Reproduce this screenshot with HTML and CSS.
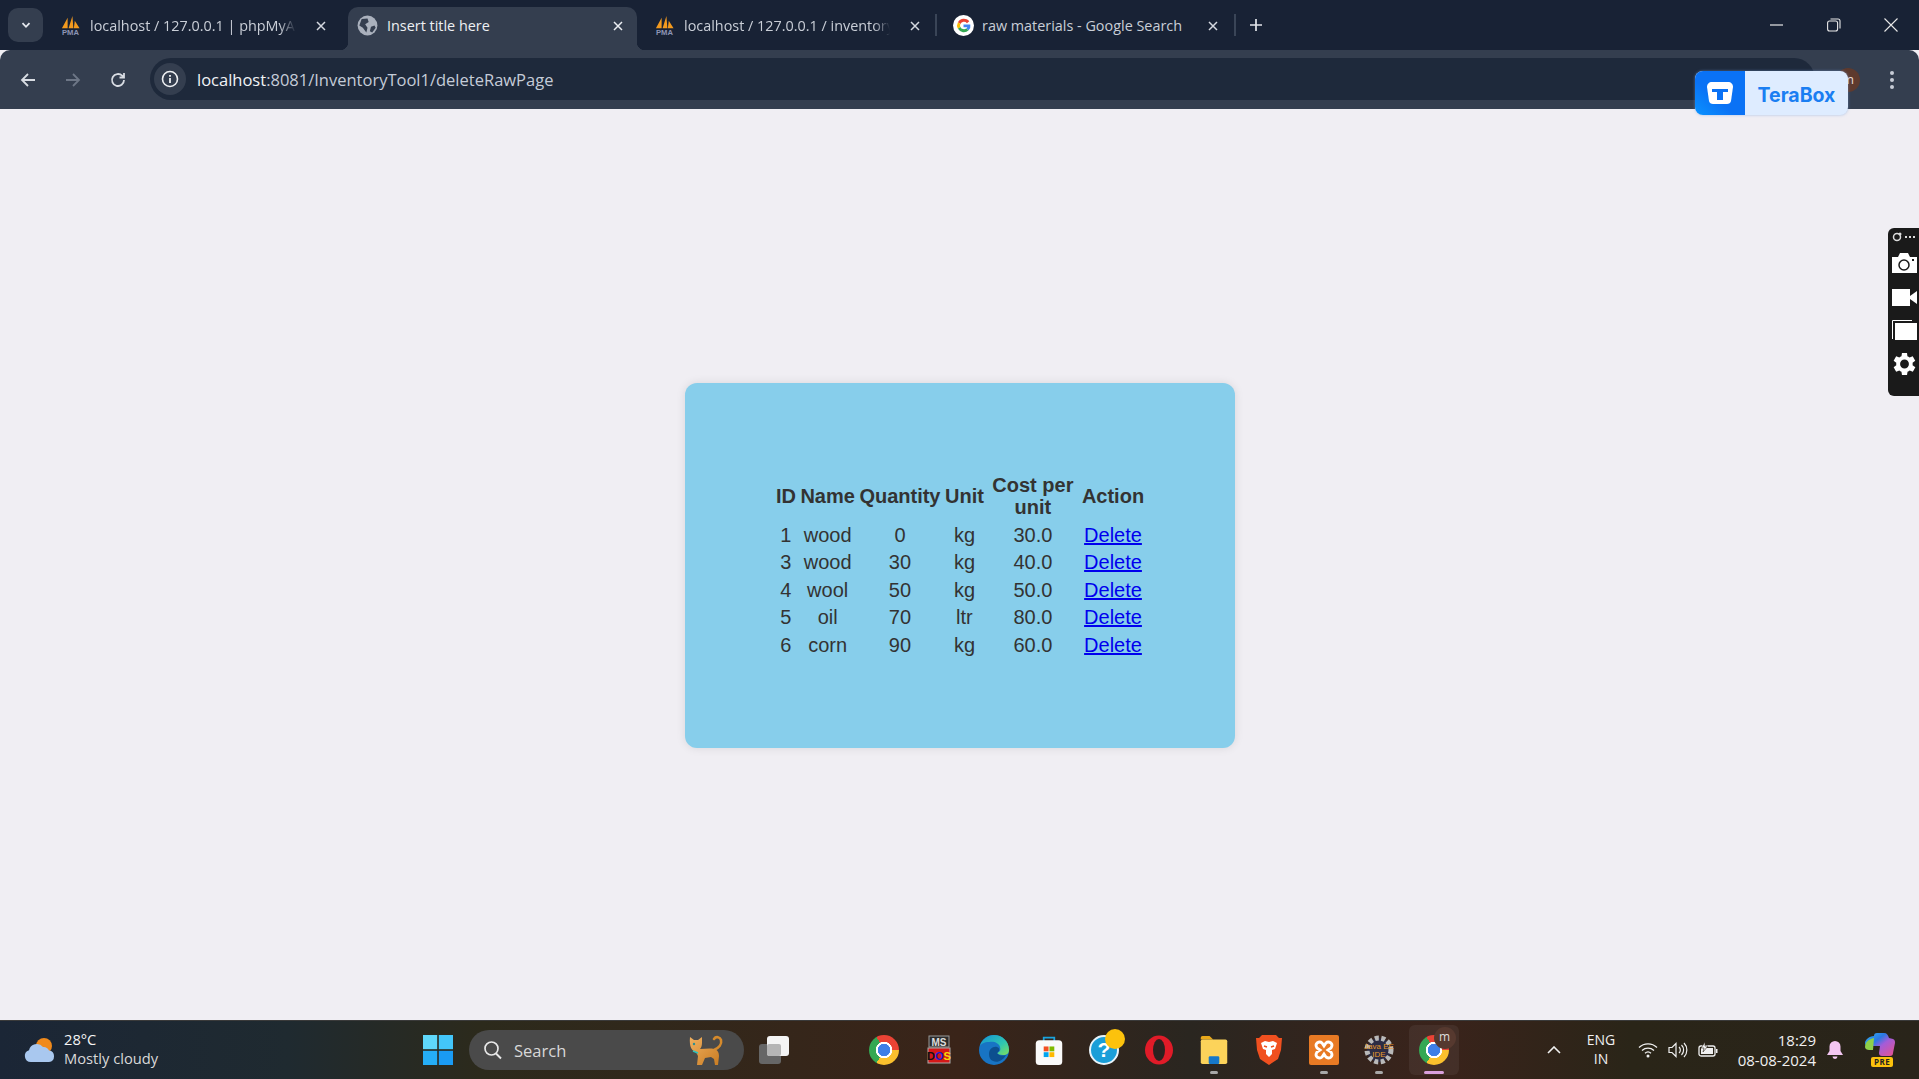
FILE: index.html
```html
<!DOCTYPE html>
<html lang="en">
<head>
  <meta charset="UTF-8">
  <meta name="viewport" content="width=device-width, initial-scale=1.0">
  <title>Insert title here</title>
  <link rel="stylesheet" href="styles.css">
</head>
<body>

  <!-- Tab strip -->
  <div class="tabstrip">
    <div class="tab-search">
      <svg width="12" height="12" viewBox="0 0 12 12"><path d="M2.5 4.2 6 7.8l3.5-3.6" fill="none" stroke="#e6e9ef" stroke-width="1.8"/></svg>
    </div>
    <div class="tab">
      <svg class="favicon" viewBox="0 0 22 22"><path d="M2 14 8 3v11zM9 14l4-13 1 13zM14.500 14l1-8 5 8z" fill="#f39a1e"/><text x="11" y="21" class="pma-mark">PMA</text></svg>
      <span class="tab-title">localhost / 127.0.0.1 | phpMyAdmin</span>
      <svg class="tab-close" viewBox="0 0 12 12"><path d="M2 2l8 8M10 2l-8 8" stroke="#d5d9e0" stroke-width="1.5"/></svg>
    </div>
    <div class="tab active">
      <svg class="favicon" viewBox="0 0 18 18"><circle cx="9" cy="9" r="8.5" fill="#aab1bd"/><path d="M4 3.5 9 3l1 3-3 2 2 3-1 4-3-4-3-2zM12 10l3-1 1 2-3 4-2-1z" fill="#343e4f"/></svg>
      <span class="tab-title">Insert title here</span>
      <svg class="tab-close" viewBox="0 0 12 12"><path d="M2 2l8 8M10 2l-8 8" stroke="#eceff3" stroke-width="1.5"/></svg>
    </div>
    <div class="tab">
      <svg class="favicon" viewBox="0 0 22 22"><path d="M2 14 8 3v11zM9 14l4-13 1 13zM14.500 14l1-8 5 8z" fill="#f39a1e"/><text x="11" y="21" class="pma-mark">PMA</text></svg>
      <span class="tab-title">localhost / 127.0.0.1 / inventory_db</span>
      <svg class="tab-close" viewBox="0 0 12 12"><path d="M2 2l8 8M10 2l-8 8" stroke="#d5d9e0" stroke-width="1.5"/></svg>
    </div>
    <span class="tab-divider"></span>
    <div class="tab next">
      <svg class="favicon" viewBox="0 0 20 20">
        <circle cx="10" cy="10" r="10" fill="#fff"/>
        <path d="M15.5 6A6.6 6.6 0 0 0 4.700 6.800L7 8.600A3.800 3.800 0 0 1 13.300 7.800z" fill="#ea4335"/>
        <path d="M4.700 6.800a6.600 6.600 0 0 0 0 6.400L7 11.400a3.800 3.800 0 0 1 0-2.800z" fill="#fbbc05"/>
        <path d="M4.700 13.200a6.600 6.600 0 0 0 10.200 1.400l-2.200-1.800A3.800 3.800 0 0 1 7 11.400z" fill="#34a853"/>
        <path d="M16.500 9H10v2.700h3.600a3 3 0 0 1-.9 1.100l2.200 1.800a6.500 6.500 0 0 0 1.600-5.600z" fill="#4285f4"/>
      </svg>
      <span class="tab-title">raw materials - Google Search</span>
      <svg class="tab-close" viewBox="0 0 12 12"><path d="M2 2l8 8M10 2l-8 8" stroke="#d5d9e0" stroke-width="1.5"/></svg>
    </div>
    <span class="tab-divider"></span>
    <svg class="new-tab" viewBox="0 0 14 14"><path d="M7 1v12M1 7h12" stroke="#e2e5ea" stroke-width="1.700"/></svg>
    <div class="window-controls">
      <svg viewBox="0 0 14 14"><path d="M0 7h13" stroke="#e8e8e8" stroke-width="1.200"/></svg>
      <svg viewBox="0 0 14 14"><rect x="0.600" y="3" width="10" height="10" rx="2" fill="none" stroke="#e8e8e8" stroke-width="1.100"/><path d="M3.500 1h7.500a2 2 0 0 1 2 2v7.500" fill="none" stroke="#e8e8e8" stroke-width="1.100"/></svg>
      <svg viewBox="0 0 14 14"><path d="M.5.500l13 13M13.500.500l-13 13" stroke="#e8e8e8" stroke-width="1.100"/></svg>
    </div>
  </div>

  <!-- Address bar -->
  <div class="toolbar">
    <svg class="nav-icon" viewBox="0 0 18 18"><path d="M16 9H3M9 3 3 9l6 6" fill="none" stroke="#d8dce3" stroke-width="1.800"/></svg>
    <svg class="nav-icon" viewBox="0 0 18 18"><path d="M2 9h13M9 3l6 6-6 6" fill="none" stroke="#6d7686" stroke-width="1.800"/></svg>
    <svg class="nav-icon" viewBox="0 0 18 18"><path d="M15 9a6 6 0 1 1-1.800-4.300L15 6.500M15 2v4.500h-4.500" fill="none" stroke="#d8dce3" stroke-width="1.800"/></svg>
    <div class="address">
      <span class="site-info">
        <svg width="18" height="18" viewBox="0 0 18 18"><circle cx="9" cy="9" r="7.500" fill="none" stroke="#eef0f3" stroke-width="1.600"/><path d="M9 8v5M9 5v1.800" stroke="#eef0f3" stroke-width="1.800"/></svg>
      </span>
      <span class="url"><span class="url-host">localhost</span>:8081/InventoryTool1/deleteRawPage</span>
    </div>
    <span class="avatar">m</span>
    <svg class="kebab" viewBox="0 0 6 20"><circle cx="3" cy="3" r="2" fill="#c7ccd6"/><circle cx="3" cy="10" r="2" fill="#c7ccd6"/><circle cx="3" cy="17" r="2" fill="#c7ccd6"/></svg>
  </div>

  <!-- Page content -->
  <main class="page">
    <div class="card">
      <table class="raw-table">
        <thead>
          <tr>
            <th>ID</th>
            <th>Name</th>
            <th>Quantity</th>
            <th>Unit</th>
            <th class="cost-col">Cost per unit</th>
            <th>Action</th>
          </tr>
        </thead>
        <tbody>
          <tr><td>1</td><td>wood</td><td>0</td><td>kg</td><td>30.0</td><td><a href="#">Delete</a></td></tr>
          <tr><td>3</td><td>wood</td><td>30</td><td>kg</td><td>40.0</td><td><a href="#">Delete</a></td></tr>
          <tr><td>4</td><td>wool</td><td>50</td><td>kg</td><td>50.0</td><td><a href="#">Delete</a></td></tr>
          <tr><td>5</td><td>oil</td><td>70</td><td>ltr</td><td>80.0</td><td><a href="#">Delete</a></td></tr>
          <tr><td>6</td><td>corn</td><td>90</td><td>kg</td><td>60.0</td><td><a href="#">Delete</a></td></tr>
        </tbody>
      </table>
    </div>
  </main>

  <!-- Taskbar -->
  <footer class="taskbar">
    <div class="weather">
      <svg width="32" height="26" viewBox="0 0 32 26">
        <circle cx="20" cy="9" r="8" fill="#f08a1c"/>
        <path d="M7 25a6 6 0 0 1-2-11.700A8 8 0 0 1 19 10a6 6 0 0 1 6 3.500A5.800 5.800 0 0 1 25 25z" fill="#a9c8ef"/>
      </svg>
      <div class="weather-text">
        <span class="temp">28°C</span>
        <span>Mostly cloudy</span>
      </div>
    </div>

    <div class="task-center">
      <svg class="win-logo" viewBox="0 0 30 30">
        <rect width="14.200" height="14.200" fill="#5fd8fb"/><rect x="15.800" width="14.200" height="14.200" fill="#43c6fa"/>
        <rect y="15.800" width="14.200" height="14.200" fill="#25aef7"/><rect x="15.800" y="15.800" width="14.200" height="14.200" fill="#1a9bf3"/>
      </svg>
      <div class="search">
        <svg width="20" height="20" viewBox="0 0 20 20"><circle cx="8.500" cy="8.500" r="6.500" fill="none" stroke="#e8e8e8" stroke-width="1.700"/><path d="M13 13.500l5 5" stroke="#e8e8e8" stroke-width="1.900"/></svg>
        <span class="search-text">Search</span>
        <svg class="search-cat" viewBox="0 0 38 32">
          <defs><linearGradient id="catFur" x1="0" y1="0" x2="1" y2="1"><stop offset="0" stop-color="#f0b060"/><stop offset="1" stop-color="#c97c22"/></linearGradient></defs>
          <path d="M26 16c5-2 8-6 7-10-1-3-5-4-7-1" fill="none" stroke="#d58a2c" stroke-width="2.600" stroke-linecap="round"/>
          <path d="M2 3l4 3h4l4-3 0 6c0 3-1 5-2 6 5 0 10-1 14 0 4 1 5 4 5 7l-1 9h-3l-1-6-3-2-6 1-3 7H9l1-9-2-4C4 17 1 13 2 3z" fill="url(#catFur)"/>
          <circle cx="6" cy="10" r="1.200" fill="#2a8f94"/>
          <path d="M5 17l5 2" stroke="#2cc5c0" stroke-width="1.500"/>
        </svg>
      </div>
      <svg class="task-view" viewBox="0 0 30 28">
        <rect y="8" width="22" height="20" rx="3" fill="#666"/>
        <rect x="8" width="22" height="20" rx="3" fill="#f4f4f4"/>
        <rect x="8" y="8" width="14" height="12" rx="2" fill="#b5b5b5"/>
      </svg>

      <div class="apps">
        <div class="app"><span class="chrome-icon"></span></div>
        <div class="app">
          <svg class="app-icon" viewBox="0 0 30 30">
            <rect x="5" y="1" width="20" height="11" fill="#2c2c2c" stroke="#999"/>
            <text x="15" y="10.500" class="dos-ms">MS</text>
            <rect x="4" y="13" width="22" height="15" fill="#d41818" stroke="#aaa"/>
            <text x="15" y="25" class="dos-os"><tspan fill="#111">D</tspan><tspan fill="#1a1ad0">O</tspan><tspan fill="#f5d90a">S</tspan></text>
          </svg>
        </div>
        <div class="app">
          <svg class="app-icon" viewBox="0 0 30 30">
            <defs><linearGradient id="edgeTop" x1="0" y1="0" x2="1" y2="1"><stop offset="0" stop-color="#1493d6"/><stop offset=".6" stop-color="#2fc6b0"/><stop offset="1" stop-color="#7fe05c"/></linearGradient></defs>
            <circle cx="15" cy="15" r="15" fill="#1874c4"/>
            <path d="M1 11C3 4 9 0 15 0c8 0 15 6 15 15 0 3-2 5-6 5-3 0-5-1-6-2 3-1 4-3 3-6-1-4-6-6-11-5-5 0-8 2-9 4z" fill="url(#edgeTop)"/>
            <path d="M10 19c0-5 4-8 8-7 3 1 3 4 0 6 2 3 6 3 9 2-3 6-9 8-13 6-3-1-4-4-4-7z" fill="#0c4f8f"/>
          </svg>
        </div>
        <div class="app">
          <svg class="app-icon" viewBox="0 0 30 34">
            <path d="M9 8V3h12v5" fill="none" stroke="#19a3dd" stroke-width="2"/>
            <rect y="6" width="30" height="28" rx="4" fill="#fafafa"/>
            <rect x="9" y="13" width="5.500" height="5.500" fill="#f25022"/><rect x="15.500" y="13" width="5.500" height="5.500" fill="#7fba00"/>
            <rect x="9" y="19.500" width="5.500" height="5.500" fill="#00a4ef"/><rect x="15.500" y="19.500" width="5.500" height="5.500" fill="#ffb900"/>
          </svg>
        </div>
        <div class="app">
          <svg class="app-icon" viewBox="0 0 30 30">
            <circle cx="15" cy="15" r="14" fill="#1a9ed8" stroke="#e9f4fa" stroke-width="2"/>
            <text x="15" y="22" class="help-mark">?</text>
          </svg>
          <span class="help-badge"></span>
        </div>
        <div class="app">
          <svg class="app-icon" viewBox="0 0 30 30">
            <ellipse cx="15" cy="15" rx="14" ry="14.500" fill="#e01b28"/>
            <ellipse cx="15" cy="15" rx="6" ry="11" fill="#2b2220"/>
          </svg>
        </div>
        <div class="app">
          <svg class="app-icon" viewBox="0 0 30 34">
            <path d="M0 3a2 2 0 0 1 2-2h8l4 4H0z" fill="#e9a91a"/>
            <rect y="5" width="30" height="28" rx="2" fill="#fcd35a"/>
            <rect x="9" y="24" width="12" height="9" rx="1.500" fill="#1678c9"/>
          </svg>
          <span class="app-dot"></span>
        </div>
        <div class="app">
          <svg class="app-icon" viewBox="0 0 26 30">
            <path d="M6 0h14l3 3 3 0-1 12-3 9-9 6-9-6-3-9L0 3l3 0z" fill="#f0501f"/>
            <path d="M5 8l4-2 4 1 4-1 4 2-2 6-3 1v4l-3 3-3-3v-4l-3-1z" fill="#fff"/>
            <path d="M8 11l3 1M18 11l-3 1" stroke="#f0501f" stroke-width="1.500"/>
          </svg>
        </div>
        <div class="app">
          <svg class="app-icon" viewBox="0 0 30 30">
            <rect width="30" height="30" rx="2" fill="#e87a24"/>
            <path d="M8 8q3-2 5 0l2 3 2-3q2-2 5 0q2 2 0 5l-3 2 3 2q2 3 0 5q-2 2-5 0l-2-3-2 3q-2 2-5 0q-2-2 0-5l3-2-3-2q-2-3 0-5z" fill="none" stroke="#fff" stroke-width="2.800"/>
          </svg>
          <span class="app-dot"></span>
        </div>
        <div class="app">
          <svg class="app-icon" viewBox="0 0 30 30">
            <circle cx="15" cy="15" r="12" fill="#2c2c44" stroke="#b9b9b9" stroke-width="5" stroke-dasharray="4 2.500"/>
            <text x="15" y="14" class="javaee">Java EE</text>
            <text x="15" y="22" class="javaee">IDE</text>
          </svg>
          <span class="app-dot"></span>
        </div>
        <div class="app running">
          <span class="chrome-icon"></span>
          <span class="profile-badge">m</span>
          <span class="app-dot wide"></span>
        </div>
      </div>
    </div>

    <div class="tray">
      <svg class="tray-caret" viewBox="0 0 14 8"><path d="M1 7l6-6 6 6" fill="none" stroke="#f0f0f0" stroke-width="1.600"/></svg>
      <div class="lang"><span>ENG</span><span>IN</span></div>
      <svg class="tray-icon" viewBox="0 0 20 16"><path d="M1 5.500a13 13 0 0 1 18 0M4 8.500a9 9 0 0 1 12 0M7 11.200a4.500 4.500 0 0 1 6 0" fill="none" stroke="#f0f0f0" stroke-width="1.300"/><circle cx="10" cy="14" r="1.500" fill="#f0f0f0"/></svg>
      <svg class="tray-icon" viewBox="0 0 20 16"><path d="M1 5.500h3l4-4v13l-4-4H1zM11 5a4 4 0 0 1 0 6M13.500 3a7 7 0 0 1 0 10M16 1a10 10 0 0 1 0 14" fill="none" stroke="#f0f0f0" stroke-width="1.200"/></svg>
      <svg class="tray-icon" viewBox="0 0 20 16"><rect x="1" y="4" width="16" height="10" rx="2" fill="none" stroke="#f0f0f0" stroke-width="1.300"/><rect x="3" y="6" width="12" height="6" fill="#f0f0f0"/><rect x="18" y="7" width="1.500" height="4" fill="#f0f0f0"/><path d="M7 0 3 6h3l-1 4 5-6H7z" fill="#f0f0f0" stroke="#2a2318" stroke-width=".6"/></svg>
      <div class="clock"><span>18:29</span><span>08-08-2024</span></div>
      <svg class="bell" viewBox="0 0 18 20"><path d="M9 1a5.500 5.500 0 0 1 5.500 5.500V11l2.500 4H1l2.500-4V6.500A5.500 5.500 0 0 1 9 1z" fill="#f3c6f2"/><path d="M6.500 16.500a2.500 2.500 0 0 0 5 0z" fill="#f3c6f2"/></svg>
      <div class="copilot">
        <svg width="30" height="24" viewBox="0 0 30 24">
          <defs><linearGradient id="copilotGrad" x1="0" y1="0" x2="1" y2="1"><stop offset="0" stop-color="#35b6f2"/><stop offset=".35" stop-color="#2a78e4"/><stop offset=".55" stop-color="#a45cd8"/><stop offset="1" stop-color="#e8528c"/></linearGradient></defs>
          <path d="M9 3a3 3 0 0 1 3-3h7c3 0 4 2 5 5l4 1c2 1 2 2 2 4l-2 10a3 3 0 0 1-3 3h-8a3 3 0 0 1-3-3l1-7H3a3 3 0 0 1-3-3c0-3 4-7 9-7z" fill="url(#copilotGrad)"/>
          <path d="M0 14c0-5 4-8 9-9l-1 12H4c-2 0-4-1-4-3z" fill="#8ed04a"/>
        </svg>
        <span class="pre-badge">PRE</span>
      </div>
    </div>
  </footer>

  <!-- TeraBox extension badge -->
  <div class="terabox">
    <span class="terabox-logo">
      <svg width="28" height="24" viewBox="0 0 28 24"><path d="M6 1h16c3 0 5 2 5 5l-2 14c-.3 2-2 3-4 3H7c-2 0-3.700-1-4-3L1 6c0-3 2-5 5-5z" fill="#fff"/><path d="M6 8h16v3h-5v8h-6v-8H6z" fill="#0a72f5"/></svg>
    </span>
    <span class="terabox-name">TeraBox</span>
  </div>

  <!-- Screen recorder side panel -->
  <div class="recorder">
    <div class="recorder-top">
      <svg width="10" height="10" viewBox="0 0 10 10"><circle cx="5" cy="5" r="3.500" fill="none" stroke="#ddd" stroke-width="1.500"/><circle cx="8" cy="2" r="1.500" fill="#ddd"/></svg>
      <span class="recorder-dots"></span>
    </div>
    <svg class="rec-camera" width="25" height="20" viewBox="0 0 25 20"><path d="M0 4h6l2-4h8l2 4h7v16H0z" fill="#fff"/><circle cx="12" cy="12" r="5" fill="none" stroke="#1a1a1a" stroke-width="1.500"/><rect x="20" y="6" width="2" height="2" fill="#1a1a1a"/></svg>
    <svg class="rec-video" width="25" height="17" viewBox="0 0 25 17"><rect width="18" height="17" fill="#fff"/><path d="M18 7l7-5v13l-7-5z" fill="#fff"/></svg>
    <svg class="rec-windows" width="25" height="20" viewBox="0 0 25 20"><path d="M.500 19V.500H20" fill="none" stroke="#fff"/><rect x="3" y="3" width="22" height="17" fill="#fff"/></svg>
    <svg class="rec-gear" width="25" height="24" viewBox="3.500 2.500 19 19"><path fill="#fff" d="M19.400 13a7.500 7.500 0 0 0 0-2l2.100-1.600-2-3.500-2.500 1a7.500 7.500 0 0 0-1.700-1L15 3.200h-4l-.4 2.700a7.500 7.500 0 0 0-1.700 1l-2.500-1-2 3.500L6.500 11a7.500 7.500 0 0 0 0 2l-2.100 1.600 2 3.500 2.500-1a7.500 7.500 0 0 0 1.700 1l.4 2.700h4l.4-2.700a7.500 7.500 0 0 0 1.700-1l2.500 1 2-3.500zM13 15.500a3.500 3.500 0 1 1 0-7 3.500 3.500 0 0 1 0 7z"/></svg>
  </div>

</body>
</html>
```

FILE: styles.css
```css
/* Reset and General Styles */
* {
  margin: 0;
  padding: 0;
  box-sizing: border-box;
}

body {
  font-family: 'Open Sans', sans-serif;
  display: flex;
  flex-direction: column;
  height: 100vh;
  overflow: hidden;
  position: relative;
  background: #f0eef3;
}

/* Tab strip */
.tabstrip {
  height: 50px;
  flex-shrink: 0;
  background: #182235;
  display: flex;
  align-items: flex-end;
  padding-left: 8px;
  color: #c9ced7;
  font-size: 14.400px;
}

.tab-search {
  width: 35px;
  height: 34px;
  margin-bottom: 8px;
  margin-right: 8px;
  border-radius: 10px;
  background: #343e4f;
  display: flex;
  align-items: center;
  justify-content: center;
}

.tab {
  width: 289px;
  height: 43px;
  margin-right: 8px;
  padding: 0 11px 6px 9px;
  display: flex;
  align-items: center;
  gap: 9px;
  border-radius: 10px 10px 0 0;
  position: relative;
}

.tab.active {
  background: #343e4f;
  color: #eef0f3;
}

.tab.active::before,
.tab.active::after {
  content: '';
  position: absolute;
  bottom: 0;
  width: 8px;
  height: 8px;
}

.tab.active::before {
  left: -8px;
  background: radial-gradient(circle at 0 0, transparent 8px, #343e4f 8.500px);
}

.tab.active::after {
  right: -8px;
  background: radial-gradient(circle at 100% 0, transparent 8px, #343e4f 8.500px);
}

.tab.next {
  margin-left: 4px;
  margin-right: 9px;
  width: 291px;
  padding-left: 12px;
  gap: 8px;
}

.favicon {
  width: 21px;
  height: 21px;
  flex-shrink: 0;
}

.pma-mark {
  font-family: 'Liberation Sans', sans-serif;
  font-size: 8px;
  font-weight: bold;
  fill: #8d94b4;
  text-anchor: middle;
}

.tab-title {
  flex: 1;
  white-space: nowrap;
  overflow: hidden;
  -webkit-mask-image: linear-gradient(to right, #000 92%, transparent 100%);
  mask-image: linear-gradient(to right, #000 92%, transparent 100%);
}

.tab.active .tab-title,
.tab.next .tab-title {
  -webkit-mask-image: none;
  mask-image: none;
}

.tab-close {
  width: 12px;
  height: 12px;
  margin: 0 2px 0 10px;
  flex-shrink: 0;
}

.tab-divider {
  width: 2px;
  height: 22px;
  background: #3a4557;
  margin-bottom: 14px;
  margin-left: -7px;
  flex-shrink: 0;
}

.new-tab {
  width: 14px;
  height: 14px;
  margin-left: 13px;
  margin-bottom: 18px;
}

.window-controls {
  margin-left: auto;
  display: flex;
  gap: 43px;
  padding-right: 21px;
  align-self: center;
}

.window-controls svg {
  width: 14px;
  height: 14px;
}

/* Address bar */
.toolbar {
  height: 59px;
  flex-shrink: 0;
  background: #343e4f;
  border-radius: 10px 10px 0 0;
  display: flex;
  align-items: center;
  padding-left: 19px;
}

.nav-icon {
  width: 18px;
  height: 18px;
  margin-right: 27px;
}

.nav-icon:nth-of-type(3) {
  margin-right: 23px;
}

.address {
  width: 1665px;
  height: 42px;
  border-radius: 21px;
  background: #1e293b;
  display: flex;
  align-items: center;
  padding-left: 4px;
  margin-top: -1px;
  color: #c5ccd8;
  font-size: 16.500px;
}

.site-info {
  width: 32px;
  height: 32px;
  border-radius: 50%;
  background: #343e4f;
  display: flex;
  align-items: center;
  justify-content: center;
  margin-right: 11px;
}

.url-host {
  color: #f1f3f6;
}

.avatar {
  width: 24px;
  height: 24px;
  border-radius: 50%;
  background: #5e3a2e;
  color: #e8dcd6;
  font-size: 13px;
  text-align: center;
  line-height: 22px;
  margin-left: 21px;
}

.kebab {
  width: 6px;
  height: 20px;
  margin-left: 29px;
}

/* Main card and table */
.page {
  flex: 1;
  display: flex;
  align-items: center;
  justify-content: center;
  padding-top: 1px;
  background: #f0eef3;
}

.card {
  width: 550px;
  height: 365px;
  background: #87ceeb;
  border-radius: 12px;
  box-shadow: 0 0 10px rgba(0, 0, 0, 0.1);
  display: flex;
  align-items: center;
  justify-content: center;
  font-family: 'Liberation Sans', Arial, sans-serif;
  font-size: 20px;
  color: #333;
}

.raw-table {
  border-spacing: 2.500px;
  line-height: 23px;
  margin: 1px 0 0 1px;
}

.raw-table th,
.raw-table td {
  padding: 1.250px;
  text-align: center;
}

.raw-table th {
  font-weight: bold;
  line-height: 22px;
  padding-bottom: 2px;
}

.cost-col {
  width: 91.500px;
}

.raw-table a {
  color: #0000ee;
}

/* Taskbar */
.taskbar {
  height: 59px;
  flex-shrink: 0;
  border-top: 1px solid #3a3a3a;
  background: linear-gradient(to right, #1b2636 0%, #1f2a30 15%, #2c2a1c 25%, #3a2419 50%, #2a2620 62%, #3a231b 75%, #2a2518 85%, #29241a 100%);
  display: flex;
  align-items: center;
  color: #f0f0f0;
  font-size: 14px;
  position: relative;
}

.weather {
  width: 423px;
  padding-left: 24px;
  display: flex;
  align-items: center;
  gap: 8px;
}

.weather-text {
  display: flex;
  flex-direction: column;
  line-height: 19px;
  margin-top: -2px;
  font-size: 14.700px;
  color: #d9d9d9;
}

.temp {
  color: #f5f5f5;
}

.task-center {
  display: flex;
  align-items: center;
}

.win-logo {
  width: 30px;
  height: 30px;
}

.search {
  width: 275px;
  height: 40px;
  margin-left: 16px;
  border-radius: 20px;
  background: #4a4a4a;
  display: flex;
  align-items: center;
  padding-left: 14px;
  gap: 11px;
  color: #d8d8d8;
  font-size: 16.500px;
}

.search-cat {
  width: 38px;
  height: 32px;
  margin-left: auto;
  margin-right: 18px;
}

.task-view {
  width: 30px;
  height: 28px;
  margin-left: 15px;
}

.apps {
  display: flex;
  margin-left: 67px;
}

.app {
  width: 55px;
  height: 50px;
  display: flex;
  align-items: center;
  justify-content: center;
  position: relative;
}

.app-icon {
  width: 30px;
  height: 30px;
}

.chrome-icon {
  width: 30px;
  height: 30px;
  border-radius: 50%;
  background-image:
    radial-gradient(circle, #3f7fe8 0 6px, #fff 6.500px 8px, transparent 8.500px),
    conic-gradient(#ea4335 0 90deg, #fbc02d 90deg 210deg, #34a853 210deg 330deg, #ea4335 330deg);
}

.running {
  width: 50px;
  margin: 0 2.500px;
  background: rgba(255, 255, 255, 0.06);
  border-radius: 6px;
}

.app-dot {
  position: absolute;
  bottom: 1px;
  left: 50%;
  width: 8px;
  height: 3px;
  margin-left: -4px;
  border-radius: 2px;
  background: #a8a8a8;
}

.app-dot.wide {
  width: 20px;
  margin-left: -10px;
  background: #d9a0dd;
}

.help-badge {
  position: absolute;
  top: 4px;
  right: 6px;
  width: 20px;
  height: 20px;
  border-radius: 50%;
  background: #fcc20c;
}

.help-mark {
  font-family: 'Liberation Sans', sans-serif;
  font-size: 21px;
  font-weight: bold;
  fill: #fff;
  text-anchor: middle;
}

.dos-ms,
.dos-os {
  font-family: 'Liberation Sans', sans-serif;
  font-weight: bold;
  text-anchor: middle;
}

.dos-ms {
  font-size: 10px;
  fill: #ddd;
}

.dos-os {
  font-size: 11px;
}

.javaee {
  font-family: 'Liberation Sans', sans-serif;
  font-size: 8px;
  fill: #e8992a;
  text-anchor: middle;
}

.profile-badge {
  position: absolute;
  top: 2px;
  right: 3px;
  width: 22px;
  height: 22px;
  border-radius: 50%;
  background: #56392f;
  color: #ddd;
  font-size: 12px;
  text-align: center;
  line-height: 20px;
}

.tray {
  margin-left: auto;
  display: flex;
  align-items: center;
  padding-right: 24px;
}

.tray-caret {
  width: 14px;
  height: 8px;
}

.lang {
  display: flex;
  flex-direction: column;
  align-items: center;
  line-height: 19px;
  width: 40px;
  margin: -2px 17px 0 20px;
}

.tray-icon {
  width: 20px;
  height: 16px;
  margin-right: 10px;
}

.clock {
  display: flex;
  flex-direction: column;
  align-items: flex-end;
  line-height: 20px;
  width: 80px;
  margin-top: -1px;
  margin-left: 8px;
  font-size: 15px;
}

.bell {
  width: 18px;
  height: 20px;
  margin-left: 10px;
}

.copilot {
  position: relative;
  width: 30px;
  height: 34px;
  margin-left: 21px;
}

.pre-badge {
  position: absolute;
  left: 6px;
  bottom: 0;
  padding: 0 3px;
  border-radius: 2px;
  background: #fcc20c;
  color: #222;
  font-size: 8px;
  font-weight: 700;
  line-height: 10px;
  letter-spacing: 0.5px;
}

/* TeraBox badge */
.terabox {
  position: absolute;
  top: 71px;
  left: 1695px;
  width: 153px;
  height: 44px;
  display: flex;
  border-radius: 8px;
  overflow: hidden;
  background: #deecff;
  box-shadow: 0 0 3px rgba(120, 160, 220, 0.6);
}

.terabox-logo {
  width: 50px;
  background: linear-gradient(to top right, #0a93ff, #0a72f5 40%);
  display: flex;
  align-items: center;
  justify-content: center;
}

.terabox-name {
  flex: 1;
  text-align: center;
  line-height: 48px;
  font-family: 'Inter', sans-serif;
  font-size: 19.500px;
  font-weight: 700;
  color: #1a7ef2;
}

/* Recorder panel */
.recorder {
  position: absolute;
  top: 228px;
  right: 0;
  width: 31px;
  height: 168px;
  background: #1a1a1a;
  border-radius: 6px 0 0 6px;
  display: flex;
  flex-direction: column;
  align-items: flex-end;
  padding: 4px 2px 0 0;
  overflow: hidden;
}

.recorder svg {
  flex-shrink: 0;
}

.recorder-top {
  display: flex;
  align-items: center;
  gap: 3px;
  width: 25px;
}

.recorder-dots {
  width: 10px;
  border-top: 2px dotted #ddd;
}

.rec-camera {
  margin-top: 11px;
}

.rec-video {
  margin-top: 16px;
}

.rec-windows {
  margin-top: 14px;
}

.rec-gear {
  margin-top: 12px;
}
```
